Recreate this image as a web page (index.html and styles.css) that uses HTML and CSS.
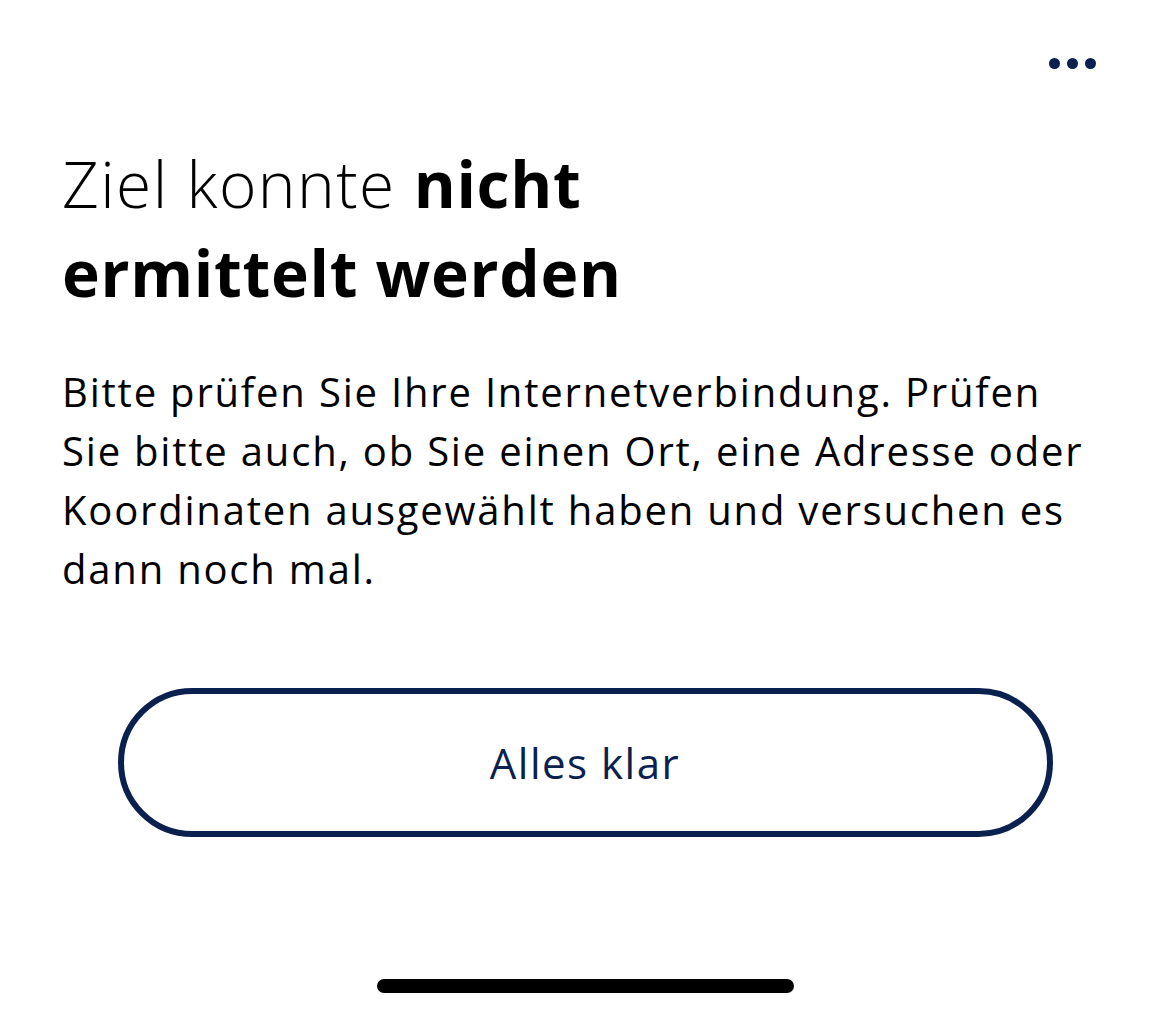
FILE: index.html
```html
<!DOCTYPE html>
<html>
<head>
    <title>Ziel konnte nicht ermittelt werden</title>
    <link rel="stylesheet" href="styles.css">
</head>
<body>
    <div class="screen">
        <div class="topbar">
            <button class="more" aria-label="Mehr">
                <span class="dot"></span><span class="dot"></span><span class="dot"></span>
            </button>
        </div>
        <main class="content">
            <h1 class="title"><span class="light">Ziel konnte </span><b>nicht</b><br><b>ermittelt werden</b></h1>
            <p class="message">Bitte prüfen Sie Ihre Internetverbindung. Prüfen Sie bitte auch, ob Sie einen Ort, eine Adresse oder Koordinaten ausgewählt haben und versuchen es dann noch mal.</p>
            <div class="actions">
                <button class="btn-outline">Alles klar</button>
            </div>
        </main>
        <div class="home-indicator"></div>
    </div>
</body>
</html>
```

FILE: styles.css
```css
body {
    margin: 0;
    padding: 0;
    background-color: #fff;
    font-family: "Open Sans", "Noto Sans", sans-serif;
    color: #000;
}

.screen {
    height: 1018px;
    display: flex;
    flex-direction: column;
    overflow: hidden;
}

.topbar {
    display: flex;
    justify-content: flex-end;
    padding: 58px 74px 0 0;
}

.more {
    display: flex;
    gap: 7px;
    padding: 0;
    border: none;
    background: none;
}

.dot {
    width: 11px;
    height: 11px;
    border-radius: 50%;
    background-color: #0a2150;
}

.content {
    flex: 1;
    padding: 0 0 0 62px;
}

.title {
    margin: 70px 0 0;
    font-size: 64px;
    line-height: 89px;
    font-weight: 300;
    letter-spacing: 0.7px;
}

.title .light {
    letter-spacing: 1.4px;
}

.title b {
    font-weight: 700;
}

.message {
    margin: 45px 0 0;
    width: 1030px;
    font-size: 40px;
    line-height: 59px;
    letter-spacing: 1.8px;
}

.actions {
    display: flex;
    justify-content: center;
    margin: 90px 62px 0 0;
}

.btn-outline {
    width: 935px;
    height: 149px;
    border: 6px solid #0a2150;
    border-radius: 75px;
    background: #fff;
    color: #0a2150;
    font-family: inherit;
    font-size: 42px;
    letter-spacing: 1.5px;
}

.home-indicator {
    align-self: center;
    width: 417px;
    height: 14px;
    border-radius: 7px;
    background-color: #000;
    margin-bottom: 25px;
}
```
